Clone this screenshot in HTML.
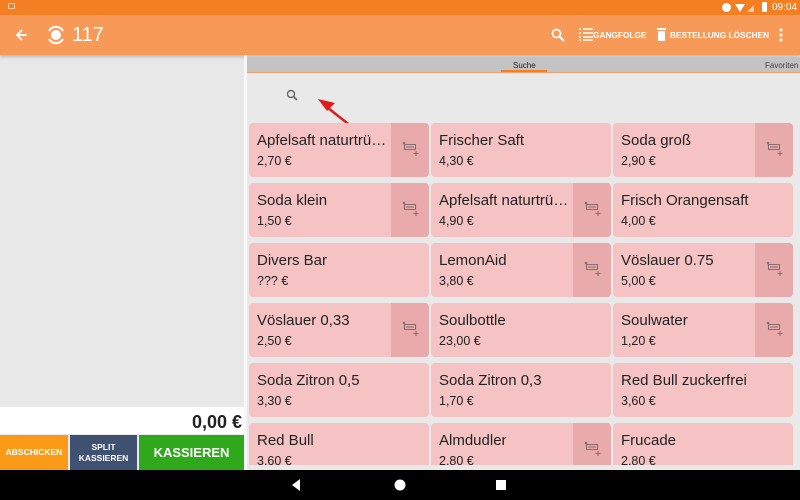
<!DOCTYPE html>
<html><head><meta charset="utf-8"><style>
*{margin:0;padding:0;box-sizing:border-box}
body{width:800px;height:500px;position:relative;overflow:hidden;background:#e8e8e8;font-family:"Liberation Sans",Roboto,sans-serif}
.abs{position:absolute}
.card{position:absolute;width:180px;height:54px;background:#f5c3c4;border-radius:4px;overflow:hidden}
.card .n{position:absolute;left:8px;top:9px;font-size:15px;color:#222;white-space:nowrap}
.card .p{position:absolute;left:8px;top:31px;font-size:12.5px;color:#222}
.card .ic{position:absolute;right:0;top:0;width:38px;height:54px;background:#e9aaac}
.card .ic svg{position:absolute;left:11px;top:18px}
</style></head><body>
<div class="abs" style="left:0;top:0;width:800px;height:15px;background:#f47f22"></div>
<div class="abs" style="left:8px;top:3px;width:7px;height:6px;border:1px solid #fbd0b0;border-radius:1px"></div>
<div class="abs" style="left:722px;top:3px;width:9px;height:9px;border-radius:50%;background:#fff"></div>
<svg class="abs" style="left:735px;top:3px" width="24" height="10"><path d="M0 1 L10 1 L5 9Z" fill="#fff"/><path d="M12 9 L19 2 L19 9Z" fill="#fff" opacity=".6"/></svg>
<div class="abs" style="left:762px;top:2px;width:5px;height:10px;background:#fff;border-radius:1px"></div>
<div class="abs" style="left:772px;top:2px;font-size:10px;color:#fff">09:04</div>
<div class="abs" style="left:0;top:15px;width:800px;height:40px;background:#f79957;box-shadow:0 2px 3px rgba(0,0,0,.2)"></div>
<svg class="abs" style="left:15px;top:28px" width="14" height="14"><path d="M12 7H2M7 2L2 7L7 12" stroke="#fff" stroke-width="1.8" fill="none"/></svg>
<svg class="abs" style="left:46px;top:24px" width="20" height="22"><circle cx="10" cy="11" r="5" fill="#fff"/><path d="M3 7A8 8 0 0 1 17 7M3 15A8 8 0 0 0 17 15" stroke="#fff" stroke-width="2" fill="none"/></svg>
<div class="abs" style="left:72px;top:24px;font-size:20px;color:#fff">117</div>
<svg class="abs" style="left:551px;top:28px" width="14" height="14"><circle cx="5.5" cy="5.5" r="4" stroke="#fff" stroke-width="1.8" fill="none"/><path d="M8.5 8.5L13 13" stroke="#fff" stroke-width="2"/></svg>
<svg class="abs" style="left:579px;top:28px" width="14" height="13"><path d="M0 1h2M0 5h2M0 9h2M0 12h2M4 1h10M4 5h10M4 9h10M4 12h10" stroke="#fff" stroke-width="1.4"/></svg>
<div class="abs" style="left:593px;top:30px;font-size:8.3px;font-weight:bold;color:#fff">GANGFOLGE</div>
<svg class="abs" style="left:657px;top:27px" width="9" height="14"><rect x="0" y="1" width="9" height="2" fill="#fff"/><rect x="1" y="4" width="7" height="10" fill="#fff"/></svg>
<div class="abs" style="left:670px;top:30px;font-size:8.3px;font-weight:bold;color:#fff">BESTELLUNG LÖSCHEN</div>
<svg class="abs" style="left:779px;top:28px" width="4" height="14"><circle cx="2" cy="2" r="1.5" fill="#fff"/><circle cx="2" cy="7" r="1.5" fill="#fff"/><circle cx="2" cy="12" r="1.5" fill="#fff"/></svg>
<div class="abs" style="left:244px;top:55px;width:3px;height:415px;background:#f7f7f7"></div>
<div class="abs" style="left:247px;top:57px;width:553px;height:16px;background:#c3c3c3;border-bottom:1px solid #f0a070"></div>
<div class="abs" style="left:501px;top:70px;width:46px;height:2px;background:#f47f22"></div>
<div class="abs" style="left:513px;top:61px;font-size:8px;color:#222">Suche</div>
<div class="abs" style="left:765px;top:61px;font-size:8px;color:#444">Favoriten</div>
<div class="abs" style="left:247px;top:74px;width:553px;height:396px;background:#e9e9e9"></div>
<svg class="abs" style="left:286px;top:89px" width="12" height="12"><circle cx="5" cy="5" r="3.5" stroke="#666" stroke-width="1.4" fill="none"/><path d="M7.5 7.5L11 11" stroke="#666" stroke-width="1.6"/></svg>
<svg class="abs" style="left:315px;top:92px" width="55" height="48"><path d="M46 42L8 12" stroke="#e01b1b" stroke-width="2.5"/><path d="M3 7L20 11L12 19Z" fill="#e01b1b"/></svg>
<div class="abs" style="left:247px;top:120px;width:553px;height:345px;overflow:hidden">
<div class="card" style="left:2px;top:3px"><div class="n">Apfelsaft naturtrü…</div><div class="p">2,70 €</div><div class="ic"><svg width="18" height="16"><circle cx="2" cy="2" r="1.3" fill="#8a6e6e"/><path d="M2.5 3.5h11v5h-11zM4 6h8M14 10v5M11.5 12.5h5" stroke="#8a6e6e" stroke-width="1.1" fill="none"/></svg></div></div>
<div class="card" style="left:184px;top:3px"><div class="n">Frischer Saft</div><div class="p">4,30 €</div></div>
<div class="card" style="left:366px;top:3px"><div class="n">Soda groß</div><div class="p">2,90 €</div><div class="ic"><svg width="18" height="16"><circle cx="2" cy="2" r="1.3" fill="#8a6e6e"/><path d="M2.5 3.5h11v5h-11zM4 6h8M14 10v5M11.5 12.5h5" stroke="#8a6e6e" stroke-width="1.1" fill="none"/></svg></div></div>
<div class="card" style="left:2px;top:63px"><div class="n">Soda klein</div><div class="p">1,50 €</div><div class="ic"><svg width="18" height="16"><circle cx="2" cy="2" r="1.3" fill="#8a6e6e"/><path d="M2.5 3.5h11v5h-11zM4 6h8M14 10v5M11.5 12.5h5" stroke="#8a6e6e" stroke-width="1.1" fill="none"/></svg></div></div>
<div class="card" style="left:184px;top:63px"><div class="n">Apfelsaft naturtrü…</div><div class="p">4,90 €</div><div class="ic"><svg width="18" height="16"><circle cx="2" cy="2" r="1.3" fill="#8a6e6e"/><path d="M2.5 3.5h11v5h-11zM4 6h8M14 10v5M11.5 12.5h5" stroke="#8a6e6e" stroke-width="1.1" fill="none"/></svg></div></div>
<div class="card" style="left:366px;top:63px"><div class="n">Frisch Orangensaft</div><div class="p">4,00 €</div></div>
<div class="card" style="left:2px;top:123px"><div class="n">Divers Bar</div><div class="p">??? €</div></div>
<div class="card" style="left:184px;top:123px"><div class="n">LemonAid</div><div class="p">3,80 €</div><div class="ic"><svg width="18" height="16"><circle cx="2" cy="2" r="1.3" fill="#8a6e6e"/><path d="M2.5 3.5h11v5h-11zM4 6h8M14 10v5M11.5 12.5h5" stroke="#8a6e6e" stroke-width="1.1" fill="none"/></svg></div></div>
<div class="card" style="left:366px;top:123px"><div class="n">Vöslauer 0.75</div><div class="p">5,00 €</div><div class="ic"><svg width="18" height="16"><circle cx="2" cy="2" r="1.3" fill="#8a6e6e"/><path d="M2.5 3.5h11v5h-11zM4 6h8M14 10v5M11.5 12.5h5" stroke="#8a6e6e" stroke-width="1.1" fill="none"/></svg></div></div>
<div class="card" style="left:2px;top:183px"><div class="n">Vöslauer 0,33</div><div class="p">2,50 €</div><div class="ic"><svg width="18" height="16"><circle cx="2" cy="2" r="1.3" fill="#8a6e6e"/><path d="M2.5 3.5h11v5h-11zM4 6h8M14 10v5M11.5 12.5h5" stroke="#8a6e6e" stroke-width="1.1" fill="none"/></svg></div></div>
<div class="card" style="left:184px;top:183px"><div class="n">Soulbottle</div><div class="p">23,00 €</div></div>
<div class="card" style="left:366px;top:183px"><div class="n">Soulwater</div><div class="p">1,20 €</div><div class="ic"><svg width="18" height="16"><circle cx="2" cy="2" r="1.3" fill="#8a6e6e"/><path d="M2.5 3.5h11v5h-11zM4 6h8M14 10v5M11.5 12.5h5" stroke="#8a6e6e" stroke-width="1.1" fill="none"/></svg></div></div>
<div class="card" style="left:2px;top:243px"><div class="n">Soda Zitron 0,5</div><div class="p">3,30 €</div></div>
<div class="card" style="left:184px;top:243px"><div class="n">Soda Zitron 0,3</div><div class="p">1,70 €</div></div>
<div class="card" style="left:366px;top:243px"><div class="n">Red Bull zuckerfrei</div><div class="p">3,60 €</div></div>
<div class="card" style="left:2px;top:303px"><div class="n">Red Bull</div><div class="p">3,60 €</div></div>
<div class="card" style="left:184px;top:303px"><div class="n">Almdudler</div><div class="p">2,80 €</div><div class="ic"><svg width="18" height="16"><circle cx="2" cy="2" r="1.3" fill="#8a6e6e"/><path d="M2.5 3.5h11v5h-11zM4 6h8M14 10v5M11.5 12.5h5" stroke="#8a6e6e" stroke-width="1.1" fill="none"/></svg></div></div>
<div class="card" style="left:366px;top:303px"><div class="n">Frucade</div><div class="p">2,80 €</div></div>
</div>
<div class="abs" style="left:0;top:407px;width:244px;height:27px;background:#fff"></div>
<div class="abs" style="right:558px;top:412px;font-size:18px;font-weight:bold;color:#222">0,00 €</div>
<div class="abs" style="left:0;top:435px;width:68px;height:35px;background:#fb9a16;color:#fff;font-size:8.5px;font-weight:bold;text-align:center;line-height:35px">ABSCHICKEN</div>
<div class="abs" style="left:70px;top:435px;width:67px;height:35px;background:#3f5170;color:#fff;font-size:8.5px;font-weight:bold;text-align:center;padding-top:7px;line-height:11px">SPLIT<br>KASSIEREN</div>
<div class="abs" style="left:139px;top:435px;width:105px;height:35px;background:#2fa81b;color:#fff;font-size:13px;font-weight:bold;text-align:center;line-height:35px">KASSIEREN</div>
<div class="abs" style="left:0;top:470px;width:800px;height:30px;background:#000"></div>
<svg class="abs" style="left:290px;top:478px" width="220" height="14"><path d="M10 1L2 7L10 13Z" fill="#fff"/><circle cx="110" cy="7" r="5.5" fill="#fff"/><rect x="206" y="2" width="10" height="10" fill="#fff"/></svg>
</body></html>
